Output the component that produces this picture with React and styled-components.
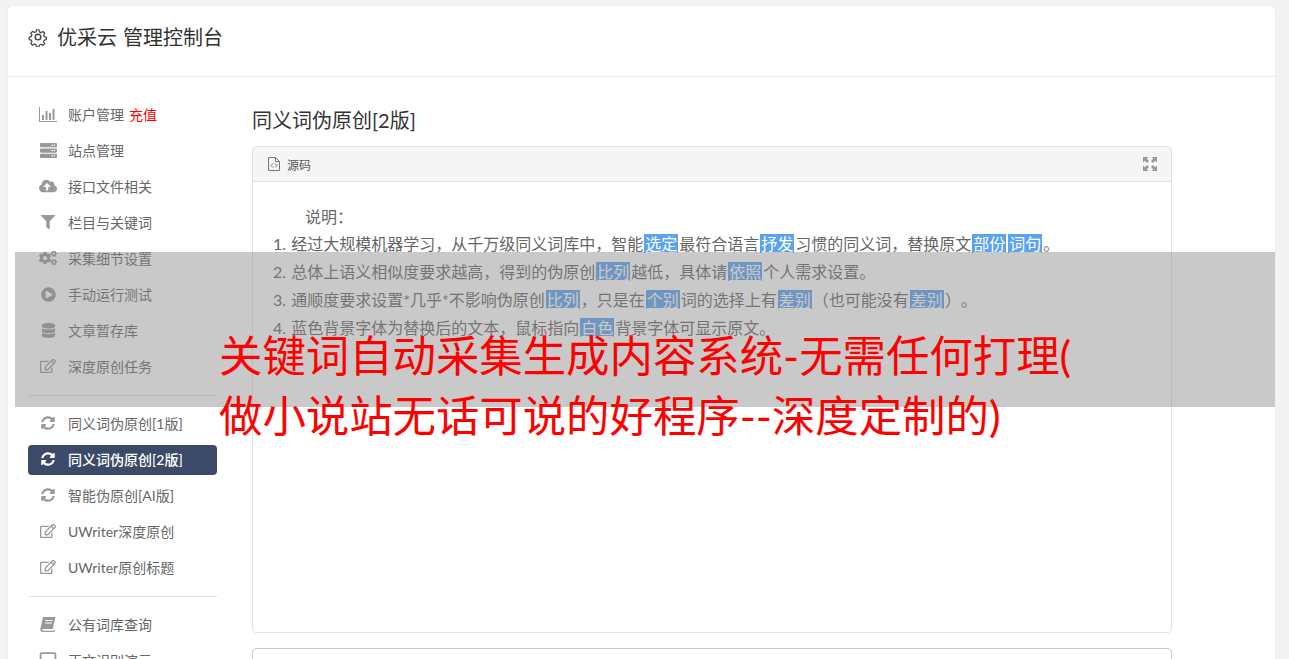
import React from 'react';
import styled, { createGlobalStyle } from 'styled-components';
import {
  FaServer,
  FaCloudUploadAlt,
  FaFilter,
  FaCogs,
  FaPlayCircle,
  FaDatabase,
  FaRegEdit,
  FaSyncAlt,
  FaRegSquare,
} from 'react-icons/fa';

const GlobalStyle = createGlobalStyle`
  html, body {
    margin: 0;
    height: 100%;
    overflow: hidden;
  }
  body {
    background: #f3f3f3;
    color: #555;
    font-family: "Lato", "Noto Sans CJK SC", sans-serif;
  }
`;

const Page = styled.div`
  position: relative;
  height: 659px;
  padding: 6px 14px 0 8px;
  overflow: hidden;
`;

const Card = styled.div`
  background: #fff;
  border-radius: 4px 4px 0 0;
  height: 700px;
  box-shadow: 0 0 1px rgba(0, 0, 0, 0.2);
`;

const Header = styled.header`
  display: flex;
  align-items: center;
  gap: 9px;
  height: 71px;
  padding: 0 20px 9px;
  box-sizing: border-box;
  border-bottom: 1px solid #e7e7e7;
  font-size: 20px;
  color: #333;
  word-spacing: 1px;
`;

const Body = styled.div`
  display: flex;
  padding-top: 19px;
`;

const Sidebar = styled.nav`
  width: 189px;
  margin: 4px 0 0 20px;
  flex: none;
`;

const MenuItem = styled.a`
  display: flex;
  align-items: center;
  box-sizing: border-box;
  height: 30px;
  margin-bottom: 6px;
  padding: 0 0 2px 11px;
  border-radius: 4px;
  font-size: 14px;
  color: ${({ $active }) => ($active ? '#fff' : '#666')};
  background: ${({ $active }) => ($active ? '#3a4a68' : 'transparent')};
  font-weight: ${({ $active }) => ($active ? 500 : 400)};
`;

const IconSlot = styled.span`
  display: flex;
  align-items: center;
  justify-content: center;
  width: 18px;
  margin-right: 11px;
  font-size: 16px;
  color: ${({ $active }) => ($active ? '#fff' : '#999')};
`;

const Badge = styled.span`
  color: #f00;
  margin-left: 5px;
`;

const Divider = styled.hr`
  border: 0;
  border-top: 1px solid #e3e3e3;
  margin: 13px 0 13px;
`;

const Main = styled.main`
  width: 920px;
  margin-left: 35px;
  flex: none;
`;

const Title = styled.h2`
  margin: 0 0 14px;
  height: 36px;
  line-height: 48px;
  font-size: 20px;
  font-weight: 400;
  color: #333;
`;

const Panel = styled.section`
  height: 487px;
  box-sizing: border-box;
  border: 1px solid #e3e3e3;
  border-radius: 4px;
`;

const PanelHead = styled.div`
  display: flex;
  align-items: center;
  justify-content: space-between;
  height: 34px;
  padding: 0 14px 0 15px;
  background: #f5f5f5;
  border-bottom: 1px solid #e3e3e3;
  border-radius: 4px 4px 0 0;
  font-size: 12px;
  color: #555;
`;

const SourceLabel = styled.span`
  display: flex;
  align-items: center;
  gap: 7px;
`;

const Notes = styled.div`
  padding: 21px 0 0 20px;
  font-size: 16px;
  line-height: 28px;
  color: #666;
  word-spacing: 1px;
  text-spacing-trim: space-all;
`;

const Lead = styled.div`
  height: 27px;
  padding-left: 32px;
`;

const Word = styled.span`
  background: #5ba3f0;
  color: #fff;
  margin: 0 1px;
  padding: 0 1px;
  text-decoration: underline;
  text-underline-offset: 2px;
`;

const NextPanel = styled.section`
  height: 40px;
  margin-top: 15px;
  border: 1px solid #ccc;
  border-radius: 4px 4px 0 0;
`;

const Banner = styled.div`
  position: absolute;
  left: 15px;
  top: 252px;
  width: 1260px;
  height: 155px;
  background: rgba(135, 135, 135, 0.45);
`;

const BannerTitle = styled.h1`
  position: absolute;
  left: 219px;
  top: 325px;
  width: 880px;
  margin: 0;
  font-size: 43.4px;
  line-height: 60px;
  font-weight: 400;
  color: #f00;
  line-break: anywhere;
`;

const GearIcon = () => (
  <svg width="20" height="20" viewBox="0 0 24 24" fill="none" stroke="#444" strokeWidth="1.7" strokeLinejoin="round">
    <circle cx="12" cy="12" r="3.4" />
    <path d="M10.2 2.5h3.6l.6 3 2.3 1 2.6-1.7 2.5 2.6-1.6 2.5 1 2.4 2.8.6v3.4l-2.9.7-1 2.3 1.7 2.5-2.6 2.5-2.5-1.6-2.3 1-.7 2.7h-3.4l-.7-2.9-2.3-1-2.5 1.7-2.5-2.5 1.6-2.6-1-2.3-2.9-.6v-3.5l2.9-.6 1-2.4-1.7-2.5 2.6-2.5 2.5 1.6 2.4-1z" transform="translate(12 12) scale(.86) translate(-12.4 -12.6)" />
  </svg>
);

const BarsIcon = () => (
  <svg width="18" height="15" viewBox="0 0 18 15" fill="currentColor">
    <path d="M0 0h1v14h17v1H0z" />
    <path d="M3 8h2v5H3zM6.500 4h2v9h-2zM10 6h2v7h-2zM13.500 2h2v11h-2z" />
  </svg>
);

const BookIcon = () => (
  <svg width="16" height="15" viewBox="0 0 16 15" fill="currentColor">
    <path d="M4 0h11.500l-.3 1.200L12.700 12H3.300c-.8 0-1.100.5-1 1 .1.400.5.800 1.100.800h9.800l1.300-1.500.4 1.700-.9 1H3C1.500 15 .4 14 .3 12.700c0-.3 0-.6.1-.9L2.700 1.300C2.900.500 3.300 0 4 0zm1.500 3-.2 1h7l.2-1zm-.6 2.500-.2 1h7l.2-1z" fillRule="evenodd" />
  </svg>
);

const CodeFileIcon = () => (
  <svg width="12" height="14" viewBox="0 0 12 14" fill="none" stroke="#777" strokeWidth="1">
    <path d="M.5.500h7l4 4v9h-11z" />
    <path d="M7.500.500v4h4M5 6.500 3 8.500l2 2M7 6.500l2 2-2 2" />
  </svg>
);

const ExpandIcon = () => (
  <svg width="14" height="14" viewBox="0 0 14 14" fill="#999">
    <path d="M0 0h5.500L3.700 1.800 6 4.100 4.100 6 1.800 3.700 0 5.500zM14 0v5.500l-1.800-1.800L9.900 6 8 4.100l2.300-2.300L8.500 0zM0 14V8.500l1.800 1.800L4.100 8 6 9.900l-2.300 2.300L5.500 14zM14 14H8.500l1.800-1.800L8 9.900 9.900 8l2.300 2.300L14 8.500z" />
  </svg>
);

const firstMenu = [
  { icon: <BarsIcon />, label: '账户管理', badge: '充值' },
  { icon: <FaServer size={17} />, label: '站点管理' },
  { icon: <FaCloudUploadAlt size={18} />, label: '接口文件相关' },
  { icon: <FaFilter size={14} />, label: '栏目与关键词' },
  { icon: <FaCogs size={18} />, label: '采集细节设置' },
  { icon: <FaPlayCircle size={15} />, label: '手动运行测试' },
  { icon: <FaDatabase size={15} />, label: '文章暂存库' },
  { icon: <FaRegEdit size={16} />, label: '深度原创任务' },
];

const secondMenu = [
  { icon: <FaSyncAlt size={14} />, label: '同义词伪原创[1版]' },
  { icon: <FaSyncAlt size={14} />, label: '同义词伪原创[2版]', active: true },
  { icon: <FaSyncAlt size={14} />, label: '智能伪原创[AI版]' },
  { icon: <FaRegEdit size={16} />, label: 'UWriter深度原创' },
  { icon: <FaRegEdit size={16} />, label: 'UWriter原创标题' },
];

const thirdMenu = [
  { icon: <BookIcon />, label: '公有词库查询' },
  { icon: <FaRegSquare size={19} />, label: '正文识别演示' },
];

const renderMenu = (items) =>
  items.map((item) => (
    <MenuItem key={item.label} $active={item.active}>
      <IconSlot $active={item.active}>{item.icon}</IconSlot>
      {item.label}
      {item.badge && <Badge>{item.badge}</Badge>}
    </MenuItem>
  ));

const App = () => (
  <>
    <GlobalStyle />
    <Page>
      <Card>
        <Header>
          <GearIcon />
          优采云 管理控制台
        </Header>
        <Body>
          <Sidebar>
            {renderMenu(firstMenu)}
            <Divider />
            {renderMenu(secondMenu)}
            <Divider />
            {renderMenu(thirdMenu)}
          </Sidebar>
          <Main>
            <Title>同义词伪原创[2版]</Title>
            <Panel>
              <PanelHead>
                <SourceLabel>
                  <CodeFileIcon />
                  源码
                </SourceLabel>
                <ExpandIcon />
              </PanelHead>
              <Notes>
                <Lead>说明：</Lead>
                <div>
                  1. 经过大规模机器学习，从千万级同义词库中，智能<Word>选定</Word>最符合语言<Word>抒发</Word>习惯的同义词，替换原文<Word>部份</Word><Word>词句</Word>。
                </div>
                <div>
                  2. 总体上语义相似度要求越高，得到的伪原创<Word>比列</Word>越低，具体请<Word>依照</Word>个人需求设置。
                </div>
                <div>
                  3. 通顺度要求设置*几乎*不影响伪原创<Word>比列</Word>，只是在<Word>个别</Word>词的选择上有<Word>差别</Word>（也可能没有<Word>差别</Word>）。
                </div>
                <div>
                  4. 蓝色背景字体为替换后的文本，鼠标指向<Word>白色</Word>背景字体可显示原文。
                </div>
              </Notes>
            </Panel>
            <NextPanel />
          </Main>
        </Body>
      </Card>
      <Banner />
      <BannerTitle>关键词自动采集生成内容系统-无需任何打理(做小说站无话可说的好程序--深度定制的)</BannerTitle>
    </Page>
  </>
);

export default App;
